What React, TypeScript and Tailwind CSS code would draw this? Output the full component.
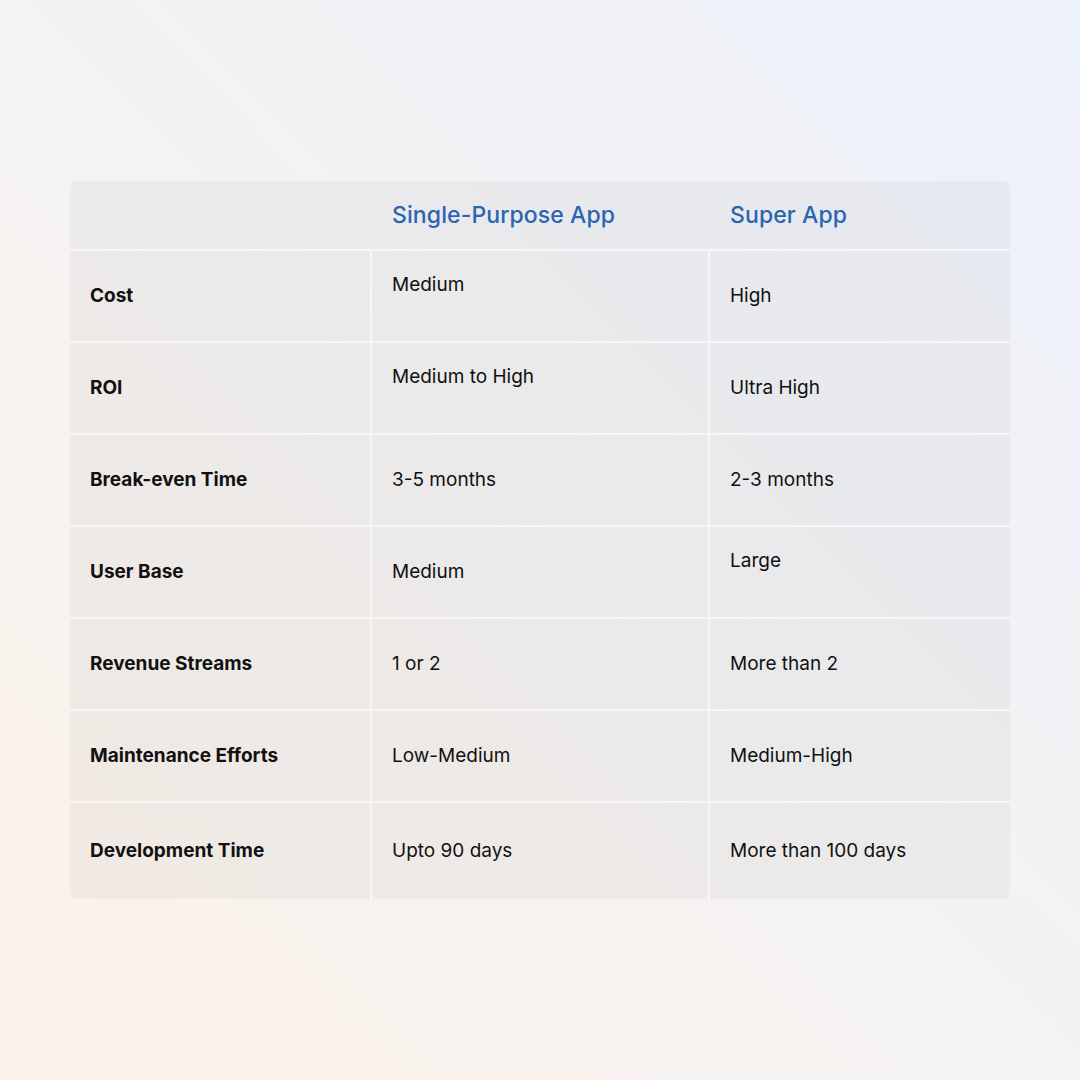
const rows: { label: string; a: string; b: string; aTop?: boolean; bTop?: boolean }[] = [
  { label: "Cost", a: "Medium", b: "High", aTop: true },
  { label: "ROI", a: "Medium to High", b: "Ultra High", aTop: true },
  { label: "Break-even Time", a: "3-5 months", b: "2-3 months" },
  { label: "User Base", a: "Medium", b: "Large", bTop: true },
  { label: "Revenue Streams", a: "1 or 2", b: "More than 2" },
  { label: "Maintenance Efforts", a: "Low-Medium", b: "Medium-High" },
  { label: "Development Time", a: "Upto 90 days", b: "More than 100 days" },
];

export default function App() {
  return (
    <main
      className="w-[1080px] h-[1080px] flex justify-center pt-[181px] bg-[linear-gradient(45deg,#fcf2ea_0%,#f4f3f3_50%,#edf1fb_100%)] text-[#111]"
      style={{ fontFamily: "Inter, 'Noto Sans', sans-serif" }}
    >
      <div className="w-[940px] h-[718px] rounded-lg overflow-hidden bg-black/[0.035] flex flex-col">
        <div className="h-[70px] grid grid-cols-[302px_338px_300px] items-center border-b-2 border-white/60">
          <div />
          <div className="pl-5 text-[23px] font-medium tracking-[0.1px] text-[#2a64b3]">Single-Purpose App</div>
          <div className="pl-5 text-[23px] font-medium tracking-[0.1px] text-[#2a64b3]">Super App</div>
        </div>
        {rows.map((r, i) => (
          <div
            key={r.label}
            className={`grid grid-cols-[302px_338px_300px] ${
              i === rows.length - 1 ? "h-[96px]" : "h-[92px] border-b-2 border-white/60"
            }`}
          >
            <div className="pl-5 flex items-center text-[19px] font-bold border-r-2 border-white/60">{r.label}</div>
            <div
              className={`pl-5 flex text-[19px] border-r-2 border-white/60 ${
                r.aTop ? "items-start pt-5" : "items-center"
              }`}
            >
              {r.a}
            </div>
            <div className={`pl-5 flex text-[19px] ${r.bTop ? "items-start pt-5" : "items-center"}`}>{r.b}</div>
          </div>
        ))}
      </div>
    </main>
  );
}
